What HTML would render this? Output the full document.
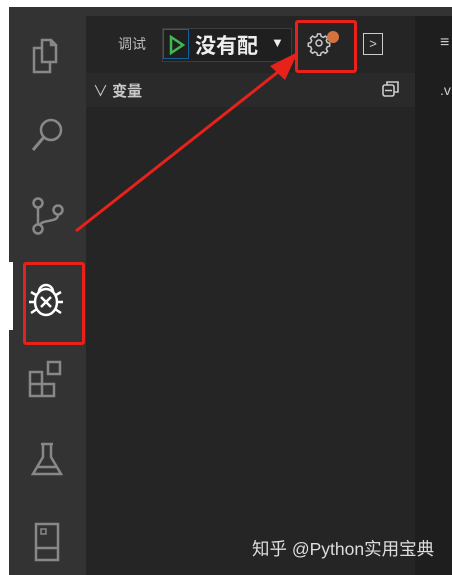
<!DOCTYPE html><html><head><meta charset="utf-8"><style>
body{margin:0;width:452px;height:575px;background:#fff;position:relative;overflow:hidden;font-family:"Liberation Sans","Noto Sans CJK SC",sans-serif}
div{position:absolute}
</style></head><body>
<div style="left:9px;top:7px;width:443px;height:568px;background:#333"></div>
<div style="left:86px;top:16px;width:329px;height:559px;background:#252526"></div>
<div style="left:415px;top:16px;width:37px;height:559px;background:#1e1e1e"></div>
<div style="left:86px;top:73px;width:329px;height:34px;background:#2a2a2b"></div>
<div style="left:118px;top:34px;color:#bbb;font-size:14px">调试</div>
<div style="left:162px;top:28px;width:128px;height:32px;border:1px solid #3c3c3c;background:#1f1f1f"></div>
<div style="left:163px;top:29px;width:26px;height:30px;border:1px solid #0e639c;box-sizing:border-box"></div>
<svg style="position:absolute;left:168px;top:35px" width="18" height="20"><path d="M3 2 L15 10 L3 18 Z" fill="none" stroke="#3fb950" stroke-width="2.5"/></svg>
<div style="left:195px;top:30px;color:#eee;font-size:21px;font-weight:bold">没有配</div>
<div style="left:271px;top:35px;color:#eee;font-size:13px">▼</div>
<svg style="position:absolute;left:307px;top:30px" width="26" height="26"><circle cx="12" cy="13" r="3" fill="none" stroke="#ccc" stroke-width="1.5"/><path d="M10.5 4 h3 l.6 2.4 2.2 1 2.2-1.3 2.1 2.1-1.3 2.2 1 2.2 2.4.6 v3 l-2.4.6-1 2.2 1.3 2.2-2.1 2.1-2.2-1.3-2.2 1-.6 2.4 h-3 l-.6-2.4-2.200-1-2.2 1.3-2.1-2.1 1.3-2.2-1-2.2-2.4-.6 v-3 l2.4-.6 1-2.2-1.3-2.2 2.1-2.1 2.2 1.3 2.2-1 z" fill="none" stroke="#ccc" stroke-width="1.5"/></svg>
<div style="left:327px;top:31px;width:12px;height:12px;border-radius:50%;background:#d5733f"></div>
<div style="left:363px;top:33px;width:20px;height:22px;border:1.5px solid #ccc;box-sizing:border-box;color:#ccc;font-size:13px;line-height:19px;text-align:center">&gt;</div>
<div style="left:440px;top:34px;color:#ccc;font-size:16px">≡</div>
<div style="left:440px;top:82px;color:#ccc;font-size:14px">.v</div>
<div style="left:93px;top:80px;color:#ccc;font-size:15px">∨ <b>变量</b></div>
<svg style="position:absolute;left:381px;top:79px" width="20" height="20"><rect x="2" y="6" width="11" height="11" rx="2" fill="none" stroke="#ccc" stroke-width="1.6"/><path d="M6 6 V3 H17 V13 H13 M4 11.5 H11" fill="none" stroke="#ccc" stroke-width="1.6"/></svg>
<svg style="position:absolute;left:20px;top:28px" width="50" height="50"><path d="M22 12 H31 L36 17 V34 H22 Z M31 12 V17 H36" fill="none" stroke="#888" stroke-width="2.5"/><path d="M22 20 H14 V44 H30 V34" fill="none" stroke="#888" stroke-width="2.5"/></svg>
<svg style="position:absolute;left:24px;top:112px" width="50" height="50"><circle cx="27" cy="18" r="10" fill="none" stroke="#888" stroke-width="2.5"/><path d="M20 25 L9 38" stroke="#888" stroke-width="3"/></svg>
<svg style="position:absolute;left:28px;top:195px" width="40" height="45"><circle cx="10" cy="8" r="4.5" fill="none" stroke="#888" stroke-width="2.5"/><circle cx="10" cy="34" r="4.5" fill="none" stroke="#888" stroke-width="2.5"/><circle cx="30" cy="15" r="4.5" fill="none" stroke="#888" stroke-width="2.5"/><path d="M10 13 V29 M30 20 C30 28 14 24 12 30" fill="none" stroke="#888" stroke-width="2.5"/></svg>
<div style="left:9px;top:262px;width:4px;height:68px;background:#fff"></div>
<svg style="position:absolute;left:26px;top:278px" width="40" height="42"><ellipse cx="20" cy="24" rx="11" ry="13" fill="none" stroke="#fff" stroke-width="2.5"/><path d="M13 14 A7 7 0 0 1 27 14 M15 19 L25 29 M25 19 L15 29 M3 24 H9 M31 24 H37 M5 14 L10 17 M35 14 L30 17 M5 35 L11 31 M35 35 L29 31" fill="none" stroke="#fff" stroke-width="2.5"/></svg>
<svg style="position:absolute;left:26px;top:358px" width="45" height="45"><path d="M4 14 H16 V26 H28 V38 H4 Z M4 26 H16 V38 M16 26 V38" fill="none" stroke="#888" stroke-width="2.5"/><rect x="22" y="4" width="12" height="12" fill="none" stroke="#888" stroke-width="2.5"/></svg>
<svg style="position:absolute;left:28px;top:440px" width="40" height="40"><path d="M13 4 H25 M15 4 V17 L5 34 H33 L23 17 V4 M9 27 H29" fill="none" stroke="#888" stroke-width="2.5"/></svg>
<svg style="position:absolute;left:30px;top:520px" width="40" height="45"><rect x="6" y="4" width="22" height="36" fill="none" stroke="#888" stroke-width="2.5"/><path d="M6 28 H28" stroke="#888" stroke-width="2.5"/><rect x="11" y="9" width="5" height="5" fill="none" stroke="#888" stroke-width="1.5"/></svg>
<div style="left:252px;top:536px;color:#ddd;font-size:17.5px">知乎 @Python实用宝典</div>
<div style="left:295px;top:20px;width:62px;height:53px;border:3px solid #e8221b;border-radius:3px;box-sizing:border-box"></div>
<div style="left:23px;top:262px;width:62px;height:83px;border:3px solid #e8221b;border-radius:3px;box-sizing:border-box"></div>
<svg style="position:absolute;left:0;top:0" width="452" height="575"><path d="M76 231 L278 72" stroke="#e8221b" stroke-width="3"/><path d="M278 72 L290 63" stroke="#e8221b" stroke-width="5"/><path d="M298 52 L270 66 L285 80 Z" fill="#e8221b"/></svg>
</body></html>
